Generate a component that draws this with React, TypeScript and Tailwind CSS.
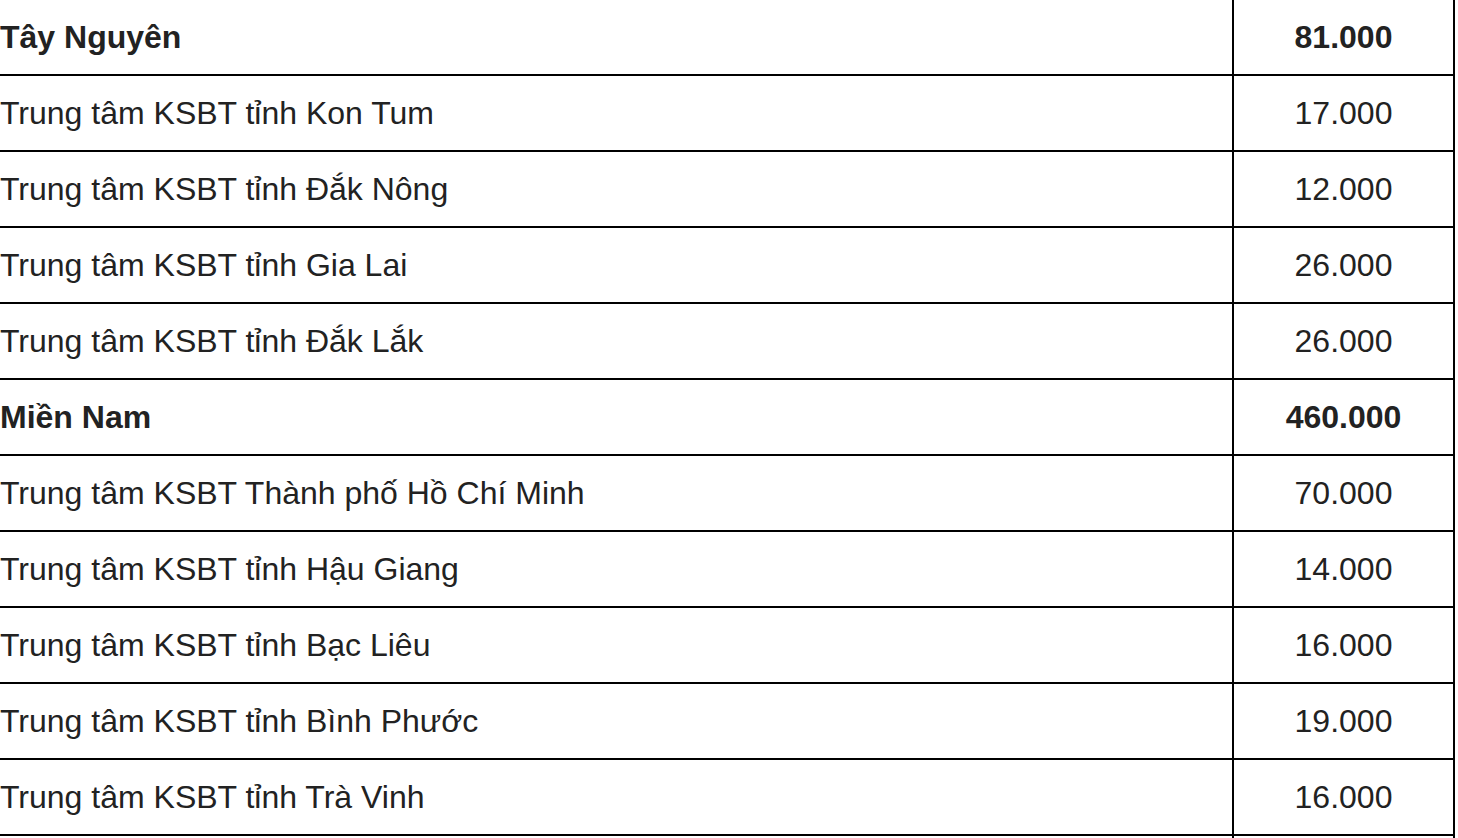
const rows: { name: string; value: string; bold?: boolean }[] = [
  { name: 'Tây Nguyên', value: '81.000', bold: true },
  { name: 'Trung tâm KSBT tỉnh Kon Tum', value: '17.000' },
  { name: 'Trung tâm KSBT tỉnh Đắk Nông', value: '12.000' },
  { name: 'Trung tâm KSBT tỉnh Gia Lai', value: '26.000' },
  { name: 'Trung tâm KSBT tỉnh Đắk Lắk', value: '26.000' },
  { name: 'Miền Nam', value: '460.000', bold: true },
  { name: 'Trung tâm KSBT Thành phố Hồ Chí Minh', value: '70.000' },
  { name: 'Trung tâm KSBT tỉnh Hậu Giang', value: '14.000' },
  { name: 'Trung tâm KSBT tỉnh Bạc Liêu', value: '16.000' },
  { name: 'Trung tâm KSBT tỉnh Bình Phước', value: '19.000' },
  { name: 'Trung tâm KSBT tỉnh Trà Vinh', value: '16.000' },
  { name: '', value: '' },
]

export default function App() {
  return (
    <div className="h-[838px] w-[1458px] overflow-hidden bg-white text-[#222] font-['Liberation_Sans',Arial,sans-serif] text-[32px]">
      <div className="w-[1455px]">
        {rows.map((r, i) => (
          <div key={i} className={`flex h-[76px] border-b-2 border-black ${r.bold ? 'font-bold' : ''}`}>
            <div className="flex w-[1234px] shrink-0 items-center border-r-2 border-black">
              {r.name}
            </div>
            <div className="flex w-[221px] shrink-0 items-center justify-center border-r-2 border-black">
              {r.value}
            </div>
          </div>
        ))}
      </div>
    </div>
  )
}
